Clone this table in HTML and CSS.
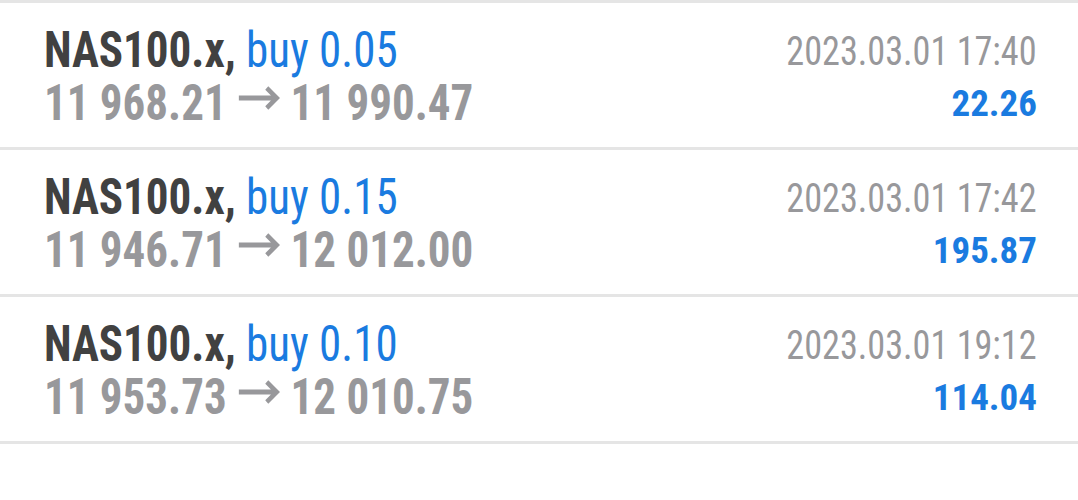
FILE: index.html
```html
<!DOCTYPE html>
<html>
<head>
    <meta charset="UTF-8">
    <title>History</title>
    <link rel="stylesheet" href="styles.css">
</head>
<body>
    <ul class="deals">
        <li class="deal">
            <div class="deal-left">
                <div class="title"><span class="symbol">NAS100.x,</span> <span class="side">buy 0.05</span></div>
                <div class="prices">11 968.21 <svg class="arrow" viewBox="0 0 45 24" aria-label="to"><path d="M0 12H42M31 2L42 12L31 22"/></svg> 11 990.47</div>
            </div>
            <div class="deal-right">
                <div class="time">2023.03.01 17:40</div>
                <div class="profit">22.26</div>
            </div>
        </li>
        <li class="deal">
            <div class="deal-left">
                <div class="title"><span class="symbol">NAS100.x,</span> <span class="side">buy 0.15</span></div>
                <div class="prices">11 946.71 <svg class="arrow" viewBox="0 0 45 24" aria-label="to"><path d="M0 12H42M31 2L42 12L31 22"/></svg> 12 012.00</div>
            </div>
            <div class="deal-right">
                <div class="time">2023.03.01 17:42</div>
                <div class="profit">195.87</div>
            </div>
        </li>
        <li class="deal">
            <div class="deal-left">
                <div class="title"><span class="symbol">NAS100.x,</span> <span class="side">buy 0.10</span></div>
                <div class="prices">11 953.73 <svg class="arrow" viewBox="0 0 45 24" aria-label="to"><path d="M0 12H42M31 2L42 12L31 22"/></svg> 12 010.75</div>
            </div>
            <div class="deal-right">
                <div class="time">2023.03.01 19:12</div>
                <div class="profit">114.04</div>
            </div>
        </li>
    </ul>
</body>
</html>
```

FILE: styles.css
```css
body {
    font-family: "Roboto Condensed", Roboto, "Liberation Sans", sans-serif;
    margin: 0;
    padding: 0;
    background-color: #ffffff;
}
.deals {
    list-style-type: none;
    margin: 0;
    padding: 0;
    border-top: 3px solid #e5e5e5;
}
.deal {
    display: flex;
    justify-content: space-between;
    align-items: flex-start;
    box-sizing: border-box;
    height: 147px;
    padding: 21px 41px 0 44px;
    border-bottom: 3px solid #e5e5e5;
    white-space: nowrap;
}
.deal-left {
    line-height: 53px;
    font-size: 50px;
}
.title, .prices {
    transform: scaleX(0.9);
    transform-origin: left center;
}
.deal-right {
    margin-top: 3px;
    line-height: 50px;
    text-align: right;
}
.symbol {
    font-weight: bold;
    color: #414141;
}
.side {
    color: #1a7be0;
}
.prices {
    font-weight: bold;
    color: #98989b;
}
.arrow {
    width: 50px;
    height: 24px;
    margin: 0 -2px 0 0;
    vertical-align: 10px;
    fill: none;
    stroke: #98989b;
    stroke-width: 5;
    stroke-linejoin: miter;
}
.time {
    font-size: 40px;
    color: #98989b;
    transform: scaleX(0.905);
    transform-origin: right center;
}
.profit {
    margin-top: 2px;
    font-size: 37px;
    font-weight: bold;
    color: #1a7be0;
}
```
